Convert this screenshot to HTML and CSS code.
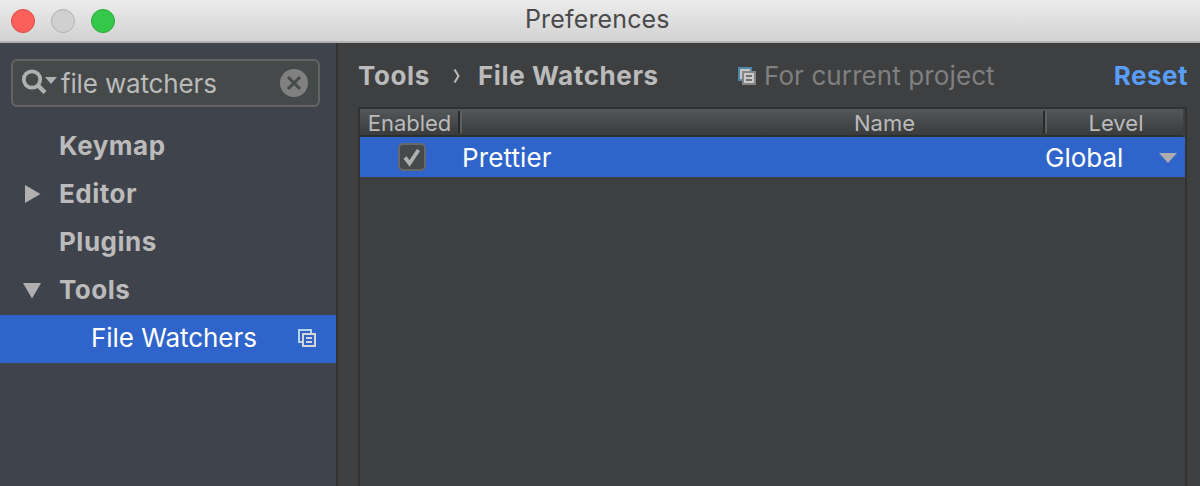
FILE: index.html
```html
<!DOCTYPE html>
<html lang="en">
<head>
<meta charset="utf-8">
<title>Preferences</title>
<link rel="stylesheet" href="styles.css">
</head>
<body>
<div class="window">
  <header class="titlebar">
    <div class="lights"><i class="light close"></i><i class="light minimize"></i><i class="light expand"></i></div>
    <h1 class="title">Preferences</h1>
  </header>
  <div class="body">
    <aside class="sidebar">
      <div class="search">
        <svg class="search-icon" width="36" height="28" viewBox="0 0 36 28"><circle cx="11" cy="10.500" r="8.200" fill="none" stroke="#b0b0b0" stroke-width="3.800"/><path d="M16.500 16l7.500 7.500" stroke="#b0b0b0" stroke-width="4.400"/><path d="M24 8h12l-6 7z" fill="#b0b0b0"/></svg>
        <span class="query">file watchers</span>
        <svg class="clear" width="28" height="28" viewBox="0 0 28 28"><circle cx="14" cy="14" r="14" fill="#808080"/><path d="M8 8l12 12M20 8L8 20" stroke="#454a4b" stroke-width="3"/></svg>
      </div>
      <nav class="tree">
        <div class="node"><span class="twist"></span><span class="label">Keymap</span></div>
        <div class="node"><span class="twist"><svg width="18" height="18" viewBox="0 0 18 18"><path d="M2 0v18l15.500-9z" fill="#b0b0b0"/></svg></span><span class="label">Editor</span></div>
        <div class="node"><span class="twist"></span><span class="label">Plugins</span></div>
        <div class="node"><span class="twist"><svg width="18" height="18" viewBox="0 0 18 18"><path d="M0 2h18l-9 15.500z" fill="#b0b0b0"/></svg></span><span class="label">Tools</span></div>
        <div class="node selected"><span class="label">File Watchers</span>
          <svg class="scope" width="18" height="18" viewBox="0 0 18 18" fill="none"><path d="M4 13H1V1h12v3" stroke="#b4d7ee" stroke-width="2"/><path d="M5 5h12v12H5zM8 9h6M8 13h6" stroke="#d6d6d6" stroke-width="2"/></svg>
        </div>
      </nav>
    </aside>
    <main class="content">
      <div class="heading">
        <span class="crumb first">Tools</span>
        <svg class="chevron" width="8" height="16" viewBox="0 0 8 16"><path d="M1.500 1.500L5.500 8l-4 6.500" fill="none" stroke="#bbb" stroke-width="2"/></svg>
        <span class="crumb second">File Watchers</span>
        <svg class="project-icon" width="18" height="18" viewBox="0 0 18 18"><path d="M0 0h14v4H4v10H0z" fill="#4f87ab"/><path d="M2 2h10v2H4v8H2z" fill="#c8c8c8"/><path d="M4 4h14v14H4z" fill="#858585"/><path d="M6 6h10v10H6z" fill="#c8c8c8"/><path d="M8 9h6M8 13h6" stroke="#707070" stroke-width="2"/></svg>
        <span class="hint">For current project</span>
        <a class="reset">Reset</a>
      </div>
      <section class="table">
        <div class="thead">
          <span class="th enabled">Enabled</span>
          <span class="th name">Name</span>
          <span class="th level">Level</span>
        </div>
        <div class="row">
          <span class="check"><svg width="24" height="24" viewBox="0 0 24 24"><path d="M5 12.500l4.500 6L18.500 5" fill="none" stroke="#b0b0b0" stroke-width="3.800"/></svg></span>
          <span class="prettier">Prettier</span>
          <span class="global">Global</span>
          <svg class="arrow" width="18" height="10" viewBox="0 0 18 10"><path d="M0 0h18l-9 10z" fill="#acacac"/></svg>
        </div>
      </section>
    </main>
  </div>
</div>
</body>
</html>
```
FILE: styles.css
```css
*, *::after { box-sizing: border-box; }
body { margin: 0; overflow: hidden; }
.window { width: 1200px; height: 486px; display: flex; flex-direction: column; background: #3d3f41; color: #bbb; font: 26px/30px Inter, "Liberation Sans", sans-serif; white-space: nowrap; }
svg { display: block; flex: none; }
.titlebar { height: 43px; flex: none; display: grid; grid-template-columns: 525px 1fr; background: linear-gradient(#ececec, #d2d2d2); border-bottom: 2px solid #b0b1b0; }
.lights { display: flex; gap: 16px; padding: 9px 0 0 11px; }
.light { width: 24px; height: 24px; border-radius: 50%; border: 1px solid; }
.close { background: #fc605b; border-color: #dd4a46; }
.minimize { background: #d0d0d0; border-color: #b1b1b1; }
.expand { background: #34c84a; border-color: #29a93a; }
.title { margin: 4px 0 0; font-size: 25px; font-weight: 400; letter-spacing: .15px; color: #4a4a4a; }
.body { flex: 1; display: flex; min-height: 0; }
.sidebar { width: 338px; border-right: 2px solid #323232; background: #3f434c; padding-top: 16px; }
.search { width: 309px; height: 48px; margin-left: 11px; border: 2px solid #646464; border-radius: 6px; background: #45494a; display: flex; align-items: center; padding: 0 10px 0 8px; }
.search-icon { margin-right: 4px; }
.query { flex: 1; letter-spacing: -.15px; padding-top: 1px; }
.tree { margin-top: 16px; }
.node { height: 48px; display: flex; align-items: center; padding-right: 20px; font-weight: 700; letter-spacing: .5px; }
.node svg { margin-top: -2px; }
.label { padding-bottom: 2px; }
.twist { width: 59px; flex: none; padding-left: 23px; }
.selected { background: #2f65ca; color: #fff; font-weight: 400; letter-spacing: -.05px; padding-left: 91px; }
.node .scope { margin: -2px 0 0 auto; }
.content { flex: 1; padding: 18px 12px 0 20px; display: flex; flex-direction: column; }
.heading { height: 30px; display: flex; align-items: center; }
.crumb { font-weight: 700; letter-spacing: .6px; }
.first { width: 95px; }
.second { margin-left: 17px; width: 260px; }
.project-icon { margin-right: 8px; }
.hint { color: #808080; letter-spacing: .1px; }
.reset { margin-left: auto; font-weight: 700; letter-spacing: .5px; color: #589df6; }
.table { margin: 16px 1px 0 0; flex: 1; border: solid #323232; border-width: 2px 2px 0; }
.thead { height: 28px; margin-right: 2px; border-bottom: 2px solid #2d2e2e; display: grid; grid-template-columns: 102px 585px 1fr; background: linear-gradient(#54585a, #393b3c); font-size: 22px; line-height: 28px; }
.th { text-align: center; position: relative; }
.enabled { padding-right: 3px; }
.name { padding-left: 260px; }
.level { padding-left: 2px; }
.enabled::after, .name::after { content: ""; position: absolute; right: 0; top: 2px; width: 4px; height: 22px; border-left: 2px solid #282929; background: #5c5e5f; }
.row { height: 40px; display: flex; align-items: center; background: #2f65ca; color: #fff; padding: 0 8px 0 38px; }
.check { width: 28px; height: 28px; border: 2px solid #68696a; border-radius: 5px; background: #45494a; }
.prettier { margin-left: 36px; width: 583px; letter-spacing: .1px; }
.prettier, .global { padding-top: 1px; }
.arrow { margin: 2px 0 0 auto; }
```
